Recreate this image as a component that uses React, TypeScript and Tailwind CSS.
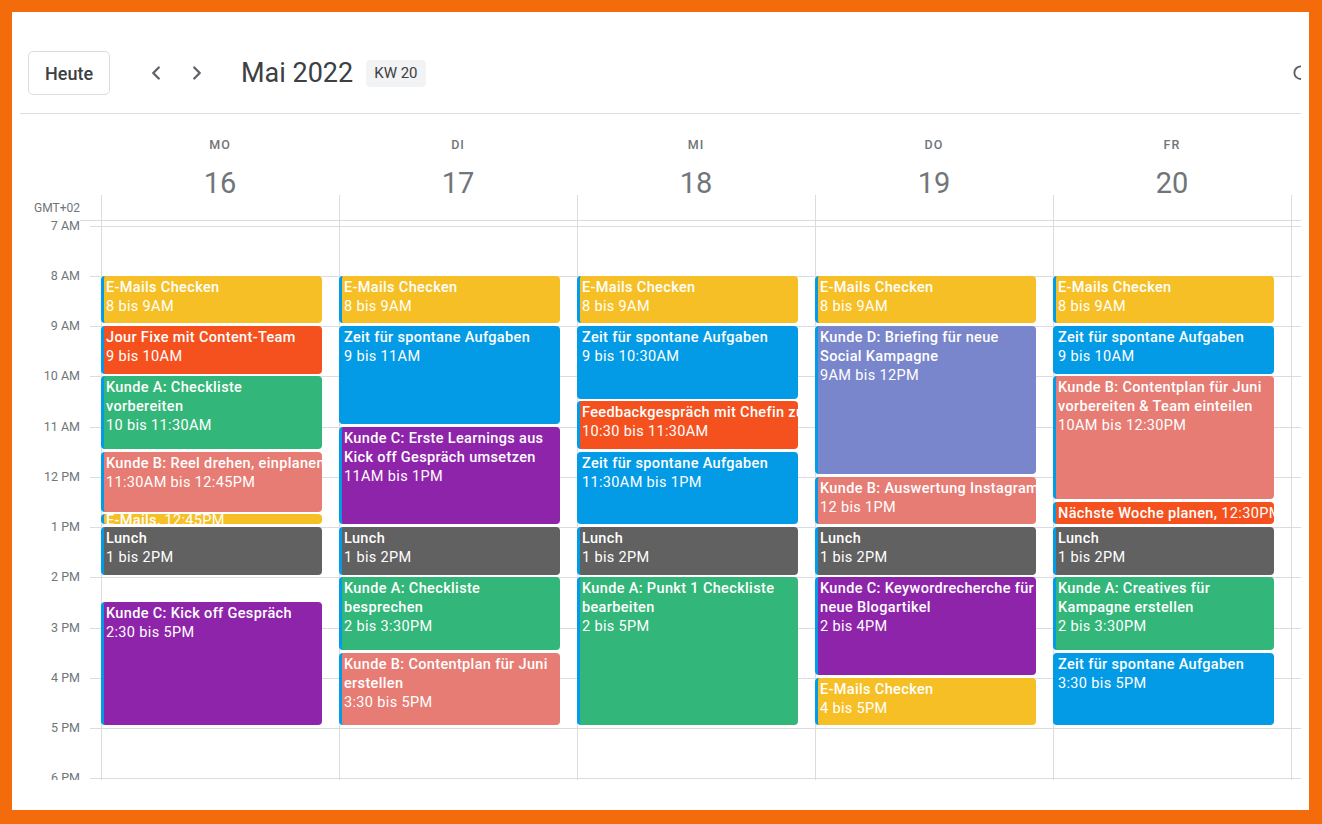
import React from 'react';
import { ChevronLeft, ChevronRight, Search } from 'lucide-react';

const H = 50.25;
const START = 7;
const OFFSET = 4.5;

type Ev = {
  s: number;
  e: number;
  c: string;
  t?: string[];
  time?: string;
  inline?: [string, string];
};

const Y = 'bg-[#f6bf26]';
const T = 'bg-[#f4511e]';
const G = 'bg-[#33b679]';
const F = 'bg-[#e67c73]';
const GR = 'bg-[#616161]';
const P = 'bg-[#8e24aa]';
const B = 'bg-[#039be5]';
const L = 'bg-[#7986cb]';

const mails: Ev = { s: 8, e: 9, c: Y, t: ['E-Mails Checken'], time: '8 bis 9AM' };
const lunch: Ev = { s: 13, e: 14, c: GR, t: ['Lunch'], time: '1 bis 2PM' };

const days: { name: string; date: string; events: Ev[] }[] = [
  {
    name: 'MO',
    date: '16',
    events: [
      mails,
      { s: 9, e: 10, c: T, t: ['Jour Fixe mit Content-Team'], time: '9 bis 10AM' },
      { s: 10, e: 11.5, c: G, t: ['Kunde A: Checkliste', 'vorbereiten'], time: '10 bis 11:30AM' },
      { s: 11.5, e: 12.75, c: F, t: ['Kunde B: Reel drehen, einplanen'], time: '11:30AM bis 12:45PM' },
      { s: 12.75, e: 13, c: Y, inline: ['E-Mails,', '12:45PM'] },
      lunch,
      { s: 14.5, e: 17, c: P, t: ['Kunde C: Kick off Gespräch'], time: '2:30 bis 5PM' },
    ],
  },
  {
    name: 'DI',
    date: '17',
    events: [
      mails,
      { s: 9, e: 11, c: B, t: ['Zeit für spontane Aufgaben'], time: '9 bis 11AM' },
      { s: 11, e: 13, c: P, t: ['Kunde C: Erste Learnings aus', 'Kick off Gespräch umsetzen'], time: '11AM bis 1PM' },
      lunch,
      { s: 14, e: 15.5, c: G, t: ['Kunde A: Checkliste', 'besprechen'], time: '2 bis 3:30PM' },
      { s: 15.5, e: 17, c: F, t: ['Kunde B: Contentplan für Juni', 'erstellen'], time: '3:30 bis 5PM' },
    ],
  },
  {
    name: 'MI',
    date: '18',
    events: [
      mails,
      { s: 9, e: 10.5, c: B, t: ['Zeit für spontane Aufgaben'], time: '9 bis 10:30AM' },
      { s: 10.5, e: 11.5, c: T, t: ['Feedbackgespräch mit Chefin zum Quartal'], time: '10:30 bis 11:30AM' },
      { s: 11.5, e: 13, c: B, t: ['Zeit für spontane Aufgaben'], time: '11:30AM bis 1PM' },
      lunch,
      { s: 14, e: 17, c: G, t: ['Kunde A: Punkt 1 Checkliste', 'bearbeiten'], time: '2 bis 5PM' },
    ],
  },
  {
    name: 'DO',
    date: '19',
    events: [
      mails,
      { s: 9, e: 12, c: L, t: ['Kunde D: Briefing für neue', 'Social Kampagne'], time: '9AM bis 12PM' },
      { s: 12, e: 13, c: F, t: ['Kunde B: Auswertung Instagram'], time: '12 bis 1PM' },
      lunch,
      { s: 14, e: 16, c: P, t: ['Kunde C: Keywordrecherche für', 'neue Blogartikel'], time: '2 bis 4PM' },
      { s: 16, e: 17, c: Y, t: ['E-Mails Checken'], time: '4 bis 5PM' },
    ],
  },
  {
    name: 'FR',
    date: '20',
    events: [
      mails,
      { s: 9, e: 10, c: B, t: ['Zeit für spontane Aufgaben'], time: '9 bis 10AM' },
      { s: 10, e: 12.5, c: F, t: ['Kunde B: Contentplan für Juni', 'vorbereiten & Team einteilen'], time: '10AM bis 12:30PM' },
      { s: 12.5, e: 13, c: T, inline: ['Nächste Woche planen,', '12:30PM'] },
      lunch,
      { s: 14, e: 15.5, c: G, t: ['Kunde A: Creatives für', 'Kampagne erstellen'], time: '2 bis 3:30PM' },
      { s: 15.5, e: 17, c: B, t: ['Zeit für spontane Aufgaben'], time: '3:30 bis 5PM' },
    ],
  },
];

const hours = ['7 AM', '8 AM', '9 AM', '10 AM', '11 AM', '12 PM', '1 PM', '2 PM', '3 PM', '4 PM', '5 PM', '6 PM'];

function Event({ ev }: { ev: Ev }) {
  const dur = ev.e - ev.s;
  const top = (ev.s - START) * H + OFFSET;
  const height = dur * H - 2.75;
  const short = dur <= 0.25;
  return (
    <div
      className={`absolute left-[-1px] right-[17px] overflow-hidden rounded-[4px] border-l-[3px] border-[#039be5] text-white ${ev.c}`}
      style={{ top, height }}
    >
      {ev.inline ? (
        <div
          className={`whitespace-nowrap pl-[2px] text-[14.5px] tracking-[0.35px] ${short ? 'pt-0 leading-[13px]' : 'pt-[2px] leading-[19px]'}`}
        >
          <span className="font-medium">{ev.inline[0]}</span> {ev.inline[1]}
        </div>
      ) : (
        <div className="pl-[2px] pt-[2px] text-[14.5px] leading-[19px] tracking-[0.35px]">
          {ev.t?.map((l, i) => (
            <div key={i} className="whitespace-nowrap font-medium">
              {l}
            </div>
          ))}
          <div className="whitespace-nowrap">{ev.time}</div>
        </div>
      )}
    </div>
  );
}

export default function App() {
  return (
    <div className="h-[824px] w-[1322px] bg-[#f36b0a] pb-[14px] pl-[12px] pr-[13px] pt-[12px] font-['Roboto',sans-serif]">
      <div className="h-full w-full bg-white">
        <div className="ml-[8px] w-[1281px] overflow-hidden">
          {/* Top bar */}
          <div className="flex h-[102px] items-start border-b border-[#dadce0] pl-[8px] pt-[39px]">
            <div className="flex h-[44px] items-center">
              <button className="flex h-[44px] w-[82px] items-center justify-center rounded-[5px] border border-[#dadce0] text-[18px] font-medium text-[#3c4043]">
                Heute
              </button>
              <div className="ml-[26px] flex h-[40px] w-[40px] items-center justify-center text-[#5f6368]">
                <ChevronLeft size={22} strokeWidth={2.6} />
              </div>
              <div className="ml-[1px] flex h-[40px] w-[40px] items-center justify-center text-[#5f6368]">
                <ChevronRight size={22} strokeWidth={2.6} />
              </div>
              <div className="ml-[24px] text-[27px] leading-[36px] text-[#3c4043]">Mai 2022</div>
              <div className="ml-[13px] flex h-[27px] items-center rounded-[4px] bg-[#f1f3f4] px-[8px] text-[15px] text-[#3c4043]">
                KW 20
              </div>
            </div>
            <div className="ml-auto mr-[-10px] flex h-[44px] items-center text-[#5f6368]">
              <Search size={19} strokeWidth={2.4} />
            </div>
          </div>

          {/* Day headers */}
          <div className="flex h-[106px]">
            <div className="w-[81px] pr-[21px] pt-[86px] text-right text-[12px] leading-[16px] text-[#70757a]">GMT+02</div>
            {days.map((d) => (
              <div key={d.name} className="flex w-[238px] flex-col">
                <div className="flex h-[81px] flex-col items-center">
                  <div className="pt-[22.5px] text-[12.5px] font-medium leading-[16px] tracking-[1px] text-[#70757a]">
                    {d.name}
                  </div>
                  <div className="mt-[16px] text-[29px] leading-[28px] text-[#70757a]">{d.date}</div>
                </div>
                <div className="h-[25px] border-l border-[#dadce0]" />
              </div>
            ))}
            <div className="flex flex-1 flex-col">
              <div className="h-[81px]" />
              <div className="h-[25px] border-l border-[#dadce0]" />
            </div>
          </div>
          <div className="ml-[60px] h-px bg-[#dadce0]" />

          {/* Body */}
          <div className="relative h-[558.5px] overflow-hidden">
            <div className="pt-[4.5px]">
              {hours.map((h) => (
                <div key={h} className="flex h-[50.25px]">
                  <div className="w-[70px] pr-[10px] text-right">
                    <span className="block -translate-y-1/2 text-[12.5px] leading-[16px] text-[#70757a]">{h}</span>
                  </div>
                  <div className="flex-1 border-t border-[#dadce0]" />
                </div>
              ))}
            </div>
            <div className="absolute inset-y-0 left-[81px] right-0 flex">
              {days.map((d) => (
                <div key={d.name} className="relative h-full w-[238px] border-l border-[#dadce0]">
                  {d.events.map((ev, i) => (
                    <Event key={i} ev={ev} />
                  ))}
                </div>
              ))}
              <div className="h-full flex-1 border-l border-[#dadce0]" />
            </div>
          </div>
        </div>
      </div>
    </div>
  );
}
